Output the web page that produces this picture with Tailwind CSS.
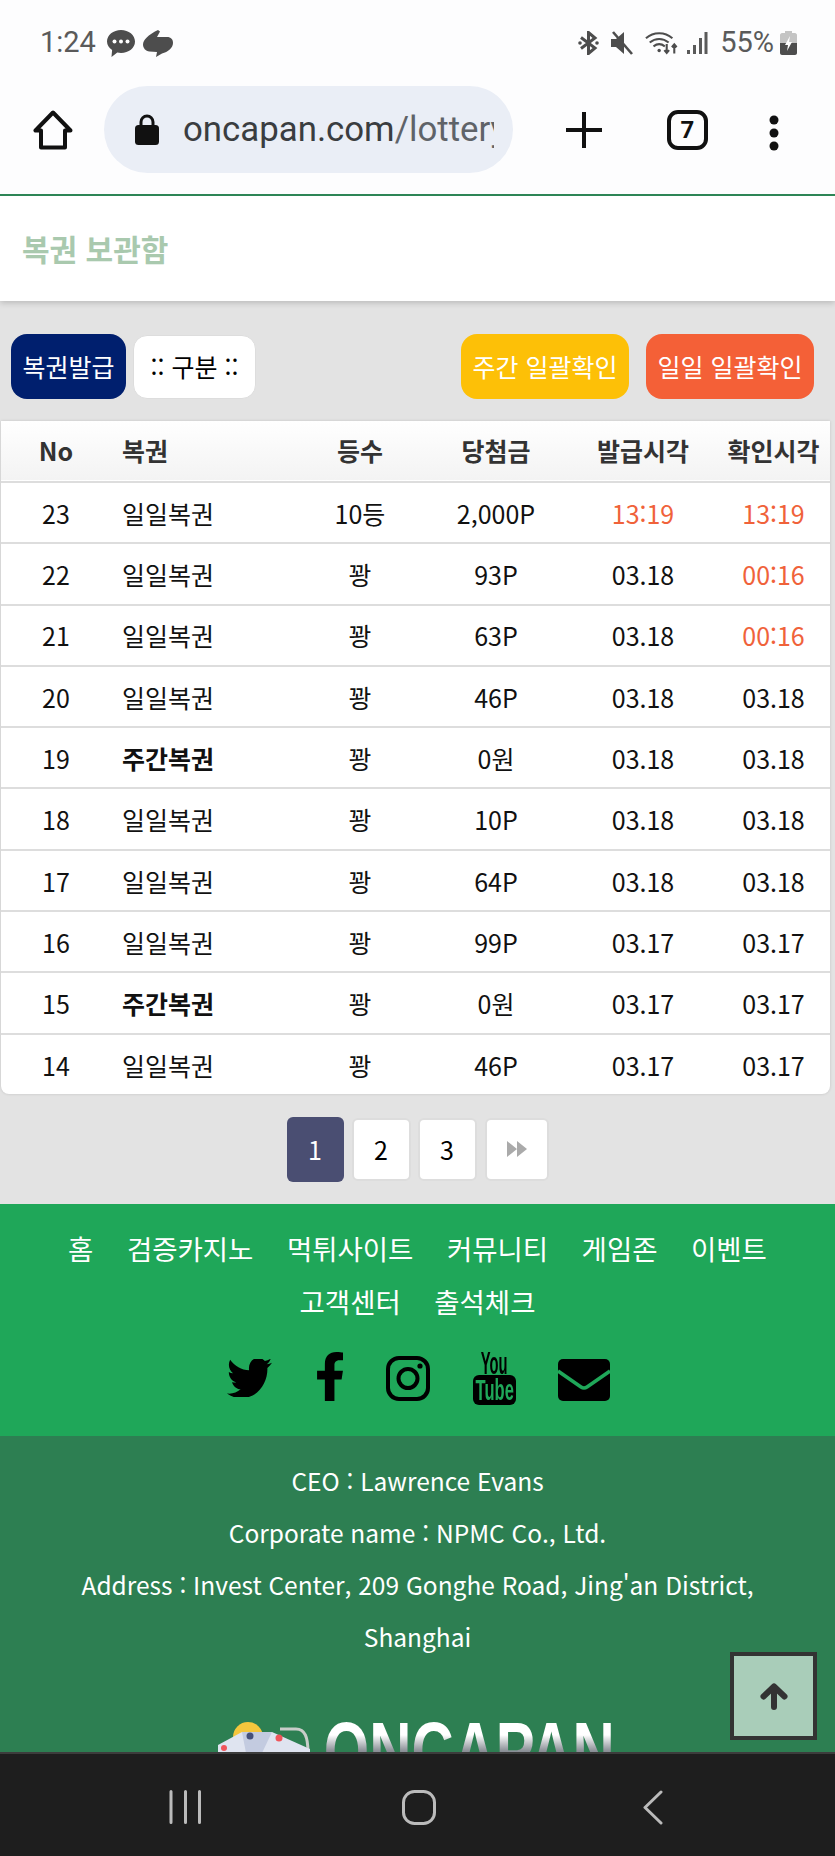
<!DOCTYPE html>
<html lang="ko">
<head>
    <meta charset="UTF-8">
    <meta name="viewport" content="width=device-width, initial-scale=1.0">
    <title>복권 보관함 - ONCAPAN</title>
    <script src="https://cdn.jsdelivr.net/npm/@tailwindcss/browser@4"></script>
</head>
<body class="bg-white font-['Noto_Sans_CJK_KR','Noto_Sans',sans-serif]">
<div class="relative w-[835px] h-[1856px] overflow-hidden flex flex-col bg-[#e3e3e3]">

    <!-- status bar -->
    <div class="h-[86px] bg-[#fdfdfe] flex items-center justify-between pl-[40px] pr-[38px] text-[#5a5a5a] font-['Roboto',sans-serif] text-[29px]">
        <div class="flex items-center">
            <span class="w-[67px]">1:24</span>
            <svg class="w-[28px] h-[27px]" viewBox="0 0 28 27"><path fill="#4d4d4d" d="M14 0c7.700 0 14 5 14 11.600S21.700 23 14 23c-1.300 0-2.500-.1-3.700-.4L4.500 27l.6-7C2 17.900 0 15 0 11.600 0 5 6.300 0 14 0z"/><circle cx="7.500" cy="11.500" r="2" fill="#fff"/><circle cx="14" cy="11.500" r="2" fill="#fff"/><circle cx="20.500" cy="11.500" r="2" fill="#fff"/></svg>
            <svg class="ml-[8px] w-[30px] h-[27px]" viewBox="0 0 30 27"><path fill="#4d4d4d" d="M15 0l2 1.500-3 5.500h10c4 0 6 2.500 6 6 0 5-5 9-11 10.500L13 27l1-5-7.500-.5C2.500 21 0 18 0 14.500 0 10 5 5 15 0z"/></svg>
        </div>
        <div class="flex items-center">
            <svg class="w-[21px] h-[24px]" viewBox="0 0 21 24" fill="none" stroke="#4d4d4d" stroke-width="3"><path d="M3 6.500L17 17l-6.500 5.500V1.500L17 7 3 17.500"/><circle cx="2" cy="12" r="1.800" fill="#4d4d4d" stroke="none"/><circle cx="19" cy="12" r="1.800" fill="#4d4d4d" stroke="none"/></svg>
            <svg class="ml-[11px] w-[23px] h-[24px]" viewBox="0 0 23 24"><path fill="#4d4d4d" d="M1 8h5l8-7v16zM1 8v8h5l8 7v-6z"/><path stroke="#4d4d4d" stroke-width="2.600" d="M3 1l19 22"/></svg>
            <svg class="ml-[12px] w-[34px] h-[24px]" viewBox="0 0 36 24" fill="none" stroke="#4d4d4d" stroke-width="2.200"><path d="M1 7c8-7 20-7 28 0M5 11.500c6-5 14-5 20 0M9 15.500c4-3 8-3 12 0"/><circle cx="15" cy="20" r="1.800" fill="#4d4d4d" stroke="none"/><path d="M23 13v9M20.500 19.500l2.500 3 2.500-3M31 23v-9M28.500 16.500l2.500-3 2.500 3"/></svg>
            <svg class="ml-[7px] w-[22px] h-[24px]" viewBox="0 0 22 24" fill="#5a5a5a"><rect x="1" y="19" width="3" height="4"/><rect x="7" y="14" width="3" height="9"/><rect x="13" y="7" width="3" height="16"/><rect x="18.500" y="1" width="3" height="22"/></svg>
            <span class="ml-[12px]">55%</span>
            <svg class="ml-[6px] w-[17px] h-[24px]" viewBox="0 0 17 24"><path fill="#c4c4c4" d="M5 0h7v2h3c1 0 2 1 2 2v8H0V4c0-1 1-2 2-2h3z"/><path fill="#4d4d4d" d="M0 12h17v10c0 1-1 2-2 2H2c-1 0-2-1-2-2z"/><path fill="#fff" d="M10 5l-5 9h3l-1 6 5-9H9z"/></svg>
        </div>
    </div>

    <!-- browser toolbar -->
    <div class="h-[108px] bg-[#fdfdfe] flex items-start pl-[33px]">
        <svg class="w-[40px] h-[40px] mt-[24px]" viewBox="0 0 40 40" fill="none" stroke="#111" stroke-width="4" stroke-linejoin="round"><path d="M20 2.500L2.500 20.500H8V37.500H32V20.500H37.500z"/></svg>
        <div class="ml-[31px] w-[409px] h-[87px] rounded-[44px] bg-[#eaeef6] flex items-center pl-[31px]">
            <svg class="w-[24px] h-[31px] shrink-0" viewBox="0 0 24 31"><path fill="none" stroke="#111" stroke-width="3" d="M6 13V8a6 6 0 0 1 12 0v5"/><rect y="11" width="24" height="20" rx="3.500" fill="#111"/></svg>
            <div class="ml-[24px] w-[311px] overflow-hidden whitespace-nowrap font-['Roboto',sans-serif] text-[34.800px] text-[#3a3d40]">oncapan.com<span class="text-[#5f6368]">/lottery</span></div>
        </div>
        <svg class="ml-[53px] mt-[26px] w-[36px] h-[36px]" viewBox="0 0 36 36" stroke="#111" stroke-width="4"><path d="M18 0v36M0 18h36"/></svg>
        <div class="ml-[65px] mt-[24px] w-[41px] h-[40px] border-[4px] border-[#111] rounded-[11px] flex items-center justify-center font-['Roboto',sans-serif] font-bold text-[24px] text-[#111]">7</div>
        <svg class="ml-[60px] mt-[29px] w-[12px] h-[36px]" viewBox="0 0 12 36" fill="#111"><circle cx="6" cy="5" r="4.500"/><circle cx="6" cy="18" r="4.500"/><circle cx="6" cy="31" r="4.500"/></svg>
    </div>

    <!-- page -->
    <div class="flex-1 min-h-0 overflow-hidden">
        <div class="h-[107px] bg-white border-t-2 border-[#2d8556] flex items-center pl-[22px] shadow-[0_2px_6px_rgba(0,0,0,0.18)]">
            <h1 class="text-[30px] font-bold text-[#a9c9ae]">복권 보관함</h1>
        </div>

        <div class="mt-[33px] flex items-center pl-[11px] pr-[21px]">
            <button class="w-[115px] h-[65px] rounded-[16px] bg-[#001f6e] text-white text-[25px]">복권발급</button>
            <button class="ml-[7px] w-[123px] h-[64px] rounded-[14px] bg-white border border-[#ddd] text-black text-[25px]">:: 구분 ::</button>
            <button class="ml-auto w-[168px] h-[65px] rounded-[16px] bg-[#fdc007] text-white text-[25px]">주간 일괄확인</button>
            <button class="ml-[17px] w-[168px] h-[65px] rounded-[16px] bg-[#f46037] text-white text-[25px]">일일 일괄확인</button>
        </div>

        <div class="mt-[22px] ml-px w-[829px] bg-white rounded-b-[8px] overflow-hidden shadow-[0_0_3px_rgba(0,0,0,0.15)]">
            <table id="lottery-table" class="w-full table-fixed border-collapse text-[25px] text-[#111] [&_td]:pt-[2px] [&_td:last-child]:pr-[2px] [&_th:last-child]:pr-[2px]">
                <colgroup>
                    <col class="w-[110px]"><col class="w-[184px]"><col class="w-[130px]"><col class="w-[142px]"><col class="w-[152px]"><col class="w-[111px]">
                </colgroup>
                <thead>
                    <tr class="h-[61px] bg-gradient-to-b from-white to-[#f3f3f3] border-b-2 border-[#ddd] text-[#333]">
                        <th class="font-bold text-center">No</th>
                        <th class="font-bold text-left pl-[11px]">복권</th>
                        <th class="font-bold text-center">등수</th>
                        <th class="font-bold text-center">당첨금</th>
                        <th class="font-bold text-center">발급시각</th>
                        <th class="font-bold text-center">확인시각</th>
                    </tr>
                </thead>
                <tbody>
                    <tr class="h-[61.300px] border-b-2 border-[#ddd]"><td class="text-center">23</td><td class="pl-[11px]">일일복권</td><td class="text-center">10등</td><td class="text-center">2,000P</td><td class="text-center text-[#f0623a]">13:19</td><td class="text-center text-[#f0623a]">13:19</td></tr>
                    <tr class="h-[61.300px] border-b-2 border-[#ddd]"><td class="text-center">22</td><td class="pl-[11px]">일일복권</td><td class="text-center">꽝</td><td class="text-center">93P</td><td class="text-center">03.18</td><td class="text-center text-[#f0623a]">00:16</td></tr>
                    <tr class="h-[61.300px] border-b-2 border-[#ddd]"><td class="text-center">21</td><td class="pl-[11px]">일일복권</td><td class="text-center">꽝</td><td class="text-center">63P</td><td class="text-center">03.18</td><td class="text-center text-[#f0623a]">00:16</td></tr>
                    <tr class="h-[61.300px] border-b-2 border-[#ddd]"><td class="text-center">20</td><td class="pl-[11px]">일일복권</td><td class="text-center">꽝</td><td class="text-center">46P</td><td class="text-center">03.18</td><td class="text-center">03.18</td></tr>
                    <tr class="h-[61.300px] border-b-2 border-[#ddd]"><td class="text-center">19</td><td class="pl-[11px] font-bold">주간복권</td><td class="text-center">꽝</td><td class="text-center">0원</td><td class="text-center">03.18</td><td class="text-center">03.18</td></tr>
                    <tr class="h-[61.300px] border-b-2 border-[#ddd]"><td class="text-center">18</td><td class="pl-[11px]">일일복권</td><td class="text-center">꽝</td><td class="text-center">10P</td><td class="text-center">03.18</td><td class="text-center">03.18</td></tr>
                    <tr class="h-[61.300px] border-b-2 border-[#ddd]"><td class="text-center">17</td><td class="pl-[11px]">일일복권</td><td class="text-center">꽝</td><td class="text-center">64P</td><td class="text-center">03.18</td><td class="text-center">03.18</td></tr>
                    <tr class="h-[61.300px] border-b-2 border-[#ddd]"><td class="text-center">16</td><td class="pl-[11px]">일일복권</td><td class="text-center">꽝</td><td class="text-center">99P</td><td class="text-center">03.17</td><td class="text-center">03.17</td></tr>
                    <tr class="h-[61.300px] border-b-2 border-[#ddd]"><td class="text-center">15</td><td class="pl-[11px] font-bold">주간복권</td><td class="text-center">꽝</td><td class="text-center">0원</td><td class="text-center">03.17</td><td class="text-center">03.17</td></tr>
                    <tr class="h-[60.300px]"><td class="text-center">14</td><td class="pl-[11px]">일일복권</td><td class="text-center">꽝</td><td class="text-center">46P</td><td class="text-center">03.17</td><td class="text-center">03.17</td></tr>
                </tbody>
            </table>
        </div>

        <div class="mt-[23px] flex items-center justify-center text-[25px]">
            <a class="w-[57px] h-[65px] rounded-[6px] bg-[#4a4e72] text-white flex items-center justify-center">1</a>
            <a class="ml-[8px] w-[59px] h-[63px] rounded-[6px] bg-white border-2 border-[#ddd] text-black flex items-center justify-center">2</a>
            <a class="ml-[7px] w-[59px] h-[63px] rounded-[6px] bg-white border-2 border-[#ddd] text-black flex items-center justify-center">3</a>
            <a class="ml-[8px] w-[64px] h-[63px] rounded-[6px] bg-white border-2 border-[#ddd] flex items-center justify-center">
                <svg class="w-[20px] h-[16px]" viewBox="0 0 20 16" fill="#aaa"><path d="M0 0l10 8-10 8zM10 0l10 8-10 8z"/></svg>
            </a>
        </div>

        <footer class="mt-[22px]">
            <div class="h-[232px] bg-[#1fa759] pt-[18px]">
                <nav class="flex flex-wrap justify-center gap-x-[33.500px] px-[60px] text-[27.500px] leading-[53px] text-white">
                    <a>홈</a><a>검증카지노</a><a>먹튀사이트</a><a>커뮤니티</a><a>게임존</a><a>이벤트</a><a>고객센터</a><a>출석체크</a>
                </nav>
                <div class="mt-[24px] flex items-start pl-[227px]">
                    <svg class="mt-[7px] w-[45px] h-[38px]" viewBox="0 60 512 392" preserveAspectRatio="none"><path d="M459.37 151.716c.325 4.548.325 9.097.325 13.645 0 138.72-105.583 298.558-298.558 298.558-59.452 0-114.68-17.219-161.137-47.106 8.447.974 16.568 1.299 25.34 1.299 49.055 0 94.213-16.568 130.274-44.832-46.132-.975-84.792-31.188-98.112-72.772 6.498.974 12.995 1.624 19.818 1.624 9.421 0 18.843-1.3 27.614-3.573-48.081-9.747-84.143-51.98-84.143-102.985v-1.299c13.969 7.797 30.214 12.67 47.431 13.319-28.264-18.843-46.781-51.005-46.781-87.391 0-19.492 5.197-37.36 14.294-52.954 51.655 63.675 129.3 105.258 216.365 109.807-1.624-7.797-2.599-15.918-2.599-24.04 0-57.828 46.782-104.934 104.934-104.934 30.213 0 57.502 12.67 76.67 33.137 23.715-4.548 46.456-13.32 66.599-25.34-7.798 24.366-24.366 44.833-46.132 57.827 21.117-2.273 41.584-8.122 60.426-16.243-14.292 20.791-32.161 39.308-52.628 54.253z"/></svg>
                    <svg class="ml-[45px] w-[26px] h-[49px]" viewBox="22 0 272 512" preserveAspectRatio="none"><path d="M279.14 288l14.22-92.66h-88.91v-60.13c0-25.35 12.42-50.06 52.24-50.06h40.42V6.26S260.43 0 225.36 0c-73.22 0-121.08 44.38-121.08 124.72v70.62H22.89V288h81.39v224h100.17V288z"/></svg>
                    <svg class="ml-[43px] mt-[4px] w-[44px] h-[45px]" viewBox="0 0 44 45" fill="none" stroke="#000" stroke-width="4"><rect x="2" y="2" width="40" height="41" rx="11"/><circle cx="22" cy="22.500" r="9.500"/><circle cx="34" cy="10" r="2.600" fill="#000" stroke="none"/></svg>
                    <div class="ml-[43px] w-[43px] flex flex-col items-center font-['Liberation_Sans',sans-serif] font-bold">
                        <div class="w-[43px] h-[23px] flex items-center justify-center">
                            <span class="shrink-0 scale-x-[.46] text-[32px] leading-[23px]">You</span>
                        </div>
                        <div class="w-[43px] h-[30px] rounded-[6px] bg-black text-[#1fa759] flex items-center justify-center overflow-hidden">
                            <span class="shrink-0 scale-x-[.55] text-[30px] leading-[30px]">Tube</span>
                        </div>
                    </div>
                    <svg class="ml-[42px] mt-[7px] w-[52px] h-[42px]" viewBox="0 0 52 42"><path d="M5 0h42a5 5 0 0 1 5 5v32a5 5 0 0 1-5 5H5a5 5 0 0 1-5-5V5a5 5 0 0 1 5-5z"/><path d="M0 12l23 16q3 2 6 0l23-16" fill="none" stroke="#1fa759" stroke-width="3.500"/></svg>
                </div>
            </div>
            <div class="bg-[#2d7f52] pt-[19px] text-center text-white text-[24.500px] leading-[52px]">
                <p>CEO : Lawrence Evans</p>
                <p>Corporate name : NPMC Co., Ltd.</p>
                <p class="px-[70px]">Address : Invest Center, 209 Gonghe Road, Jing'an District, Shanghai</p>
                <div class="mt-[48px] h-[80px] flex items-start pl-[218px]">
                    <svg class="mt-[10px] w-[92px] h-[60px]" viewBox="0 0 92 60"><circle cx="30" cy="16" r="15" fill="#f4c63d"/><path d="M62 8h16c9 0 12 8 12 24" fill="none" stroke="#c9cdc9" stroke-width="3"/><path d="M0 24L24 11H54L92 28V60H0z" fill="#dfe4f0"/><path d="M24 11H54L44 32H28z" fill="#c3cbe0"/><circle cx="32" cy="15" r="3.500" fill="#45507a"/><circle cx="61" cy="17" r="3.500" fill="#f0555a"/><circle cx="6" cy="27" r="3" fill="#f0555a"/></svg>
                    <div class="ml-[17px] w-[284px] flex justify-center">
                        <span class="shrink-0 scale-x-[.73] font-['Liberation_Sans',sans-serif] font-bold text-[80px] leading-[80px] whitespace-nowrap bg-gradient-to-b from-white from-30% to-[#8a8f96] to-50% bg-clip-text text-transparent">ONCAPAN</span>
                    </div>
                </div>
            </div>
        </footer>
    </div>

    <!-- back to top -->
    <button class="absolute left-[730px] top-[1652px] w-[87px] h-[88px] border-[4px] border-[#333] bg-[#a9cdb9] flex items-center justify-center">
        <svg class="w-[28px] h-[27px]" viewBox="0 0 28 27" fill="none" stroke="#333" stroke-width="6" stroke-linecap="round" stroke-linejoin="round"><path d="M14 24V4M3.500 13.500L14 3.500l10.500 10"/></svg>
    </button>

    <!-- android nav bar -->
    <div class="h-[104px] shrink-0 bg-[#1e1e1e] border-t-2 border-[#3c3c3c] relative flex items-center pl-[169px] pt-[4px]">
        <svg class="w-[33px] h-[34px]" viewBox="0 0 33 34" stroke="#bbb" stroke-width="3" stroke-linecap="round"><path d="M2 1.500v31M16.500 1.500v31M30.500 1.500v31"/></svg>
        <svg class="ml-[200px] w-[34px] h-[35px]" viewBox="0 0 34 35" fill="none" stroke="#bbb" stroke-width="3"><rect x="1.500" y="1.500" width="31" height="32" rx="11"/></svg>
        <svg class="ml-[207px] w-[20px] h-[35px]" viewBox="0 0 20 35" fill="none" stroke="#bbb" stroke-width="3" stroke-linecap="round" stroke-linejoin="round"><path d="M18 2L2 17.500 18 33"/></svg>
    </div>
</div>
</body>
</html>
